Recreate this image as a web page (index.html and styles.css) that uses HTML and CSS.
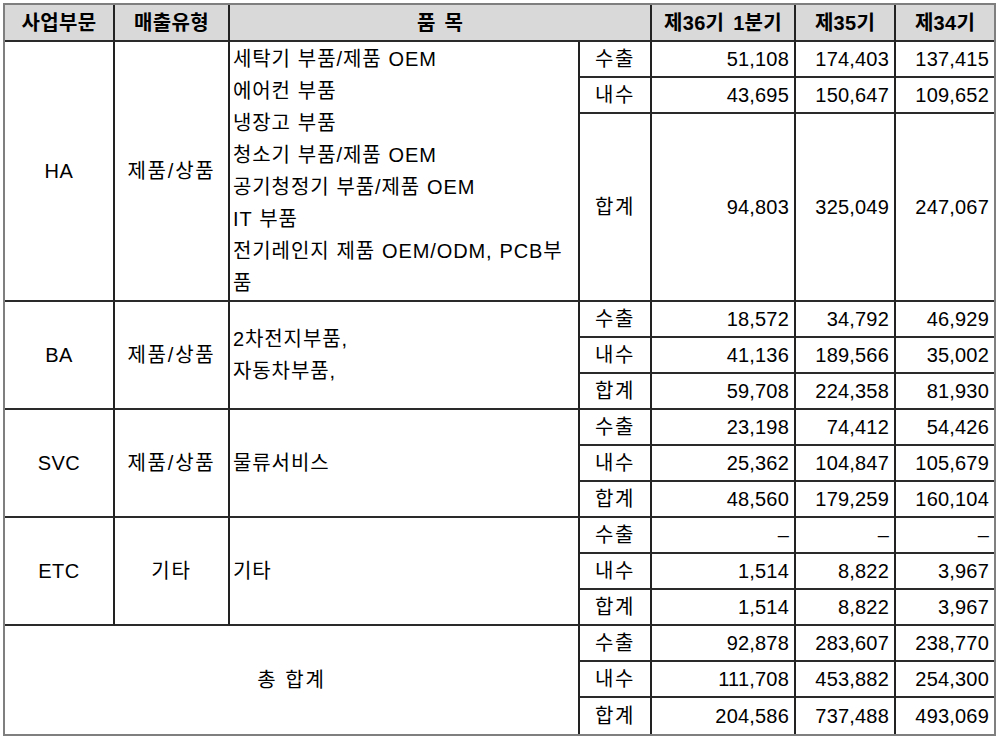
FILE: index.html
```html
<!DOCTYPE html>
<html lang="ko">
<head>
<meta charset="utf-8">
<title>매출실적</title>
<link rel="stylesheet" href="styles.css">
</head>
<body>
<table class="sales">
  <colgroup>
    <col class="c-seg">
    <col class="c-type">
    <col class="c-item">
    <col class="c-kind">
    <col class="c-q">
    <col class="c-y">
    <col class="c-y-last">
  </colgroup>
  <thead>
    <tr class="head">
      <th>사업부문</th>
      <th>매출유형</th>
      <th colspan="2">품 목</th>
      <th>제36기 1분기</th>
      <th>제35기</th>
      <th>제34기</th>
    </tr>
  </thead>
  <tbody>
    <tr class="row">
      <td rowspan="3" class="seg">HA</td>
      <td rowspan="3" class="type">제품/상품</td>
      <td rowspan="3" class="items">세탁기 부품/제품 OEM<br>에어컨 부품<br>냉장고 부품<br>청소기 부품/제품 OEM<br>공기청정기 부품/제품 OEM<br>IT 부품<br>전기레인지 제품 OEM/ODM, PCB부<br>품</td>
      <td class="kind">수출</td>
      <td class="num">51,108</td>
      <td class="num">174,403</td>
      <td class="num">137,415</td>
    </tr>
    <tr class="row">
      <td class="kind">내수</td>
      <td class="num">43,695</td>
      <td class="num">150,647</td>
      <td class="num">109,652</td>
    </tr>
    <tr class="row-tall">
      <td class="kind">합계</td>
      <td class="num">94,803</td>
      <td class="num">325,049</td>
      <td class="num">247,067</td>
    </tr>

    <tr class="row">
      <td rowspan="3" class="seg">BA</td>
      <td rowspan="3" class="type">제품/상품</td>
      <td rowspan="3" class="items">2차전지부품,<br>자동차부품,</td>
      <td class="kind">수출</td>
      <td class="num">18,572</td>
      <td class="num">34,792</td>
      <td class="num">46,929</td>
    </tr>
    <tr class="row">
      <td class="kind">내수</td>
      <td class="num">41,136</td>
      <td class="num">189,566</td>
      <td class="num">35,002</td>
    </tr>
    <tr class="row">
      <td class="kind">합계</td>
      <td class="num">59,708</td>
      <td class="num">224,358</td>
      <td class="num">81,930</td>
    </tr>

    <tr class="row">
      <td rowspan="3" class="seg">SVC</td>
      <td rowspan="3" class="type">제품/상품</td>
      <td rowspan="3" class="items">물류서비스</td>
      <td class="kind">수출</td>
      <td class="num">23,198</td>
      <td class="num">74,412</td>
      <td class="num">54,426</td>
    </tr>
    <tr class="row">
      <td class="kind">내수</td>
      <td class="num">25,362</td>
      <td class="num">104,847</td>
      <td class="num">105,679</td>
    </tr>
    <tr class="row">
      <td class="kind">합계</td>
      <td class="num">48,560</td>
      <td class="num">179,259</td>
      <td class="num">160,104</td>
    </tr>

    <tr class="row">
      <td rowspan="3" class="seg">ETC</td>
      <td rowspan="3" class="type">기타</td>
      <td rowspan="3" class="items">기타</td>
      <td class="kind">수출</td>
      <td class="num">–</td>
      <td class="num">–</td>
      <td class="num">–</td>
    </tr>
    <tr class="row">
      <td class="kind">내수</td>
      <td class="num">1,514</td>
      <td class="num">8,822</td>
      <td class="num">3,967</td>
    </tr>
    <tr class="row">
      <td class="kind">합계</td>
      <td class="num">1,514</td>
      <td class="num">8,822</td>
      <td class="num">3,967</td>
    </tr>

    <tr class="row">
      <td rowspan="3" colspan="3" class="type total-label">총 합계</td>
      <td class="kind">수출</td>
      <td class="num">92,878</td>
      <td class="num">283,607</td>
      <td class="num">238,770</td>
    </tr>
    <tr class="row">
      <td class="kind">내수</td>
      <td class="num">111,708</td>
      <td class="num">453,882</td>
      <td class="num">254,300</td>
    </tr>
    <tr class="row last">
      <td class="kind">합계</td>
      <td class="num">204,586</td>
      <td class="num">737,488</td>
      <td class="num">493,069</td>
    </tr>
  </tbody>
</table>
</body>
</html>
```

FILE: styles.css
```css
html, body {
  margin: 0;
  padding: 0;
  background: #ffffff;
}

body {
  font-family: "Liberation Sans", "Noto Sans CJK KR", sans-serif;
  color: #000000;
}

.sales {
  margin: 3px 0 0 3px;
  width: 993px;
  table-layout: fixed;
  border-collapse: separate;
  border-spacing: 0;
  border: 2px solid #7f7f7f;
  font-size: 20px;
  word-spacing: 0.5px;
}

.c-seg { width: 110px; }
.c-type { width: 115px; }
.c-item { width: 350px; }
.c-kind { width: 72px; }
.c-q { width: 144px; }
.c-y { width: 100px; }
.c-y-last { width: 98px; }

.sales th,
.sales td {
  border-right: 2px solid #222222;
  border-bottom: 2px solid #2a2a2a;
  padding: 0;
  line-height: 32px;
  white-space: nowrap;
  overflow: hidden;
}

.sales th:last-child,
.sales td:last-child {
  border-right: none;
}

.sales .last td,
.sales .total-label {
  border-bottom: none;
}

.head {
  height: 37px;
  background: #d9d9d9;
}

.sales .head th {
  font-weight: bold;
  text-align: center;
  letter-spacing: 0.3px;
  word-spacing: 3px;
}

.row { height: 36px; }
.row-tall { height: 188px; }

.sales .seg {
  text-align: center;
  vertical-align: middle;
  letter-spacing: 0.5px;
}

.sales .type {
  text-align: center;
  vertical-align: middle;
  letter-spacing: 1.8px;
}

.sales .items {
  text-align: left;
  vertical-align: middle;
  padding-left: 3px;
  letter-spacing: 0.9px;
}

.sales .kind {
  text-align: center;
  letter-spacing: 1.5px;
}

.sales .num {
  text-align: right;
  padding-right: 5px;
  letter-spacing: 0.2px;
}
```
